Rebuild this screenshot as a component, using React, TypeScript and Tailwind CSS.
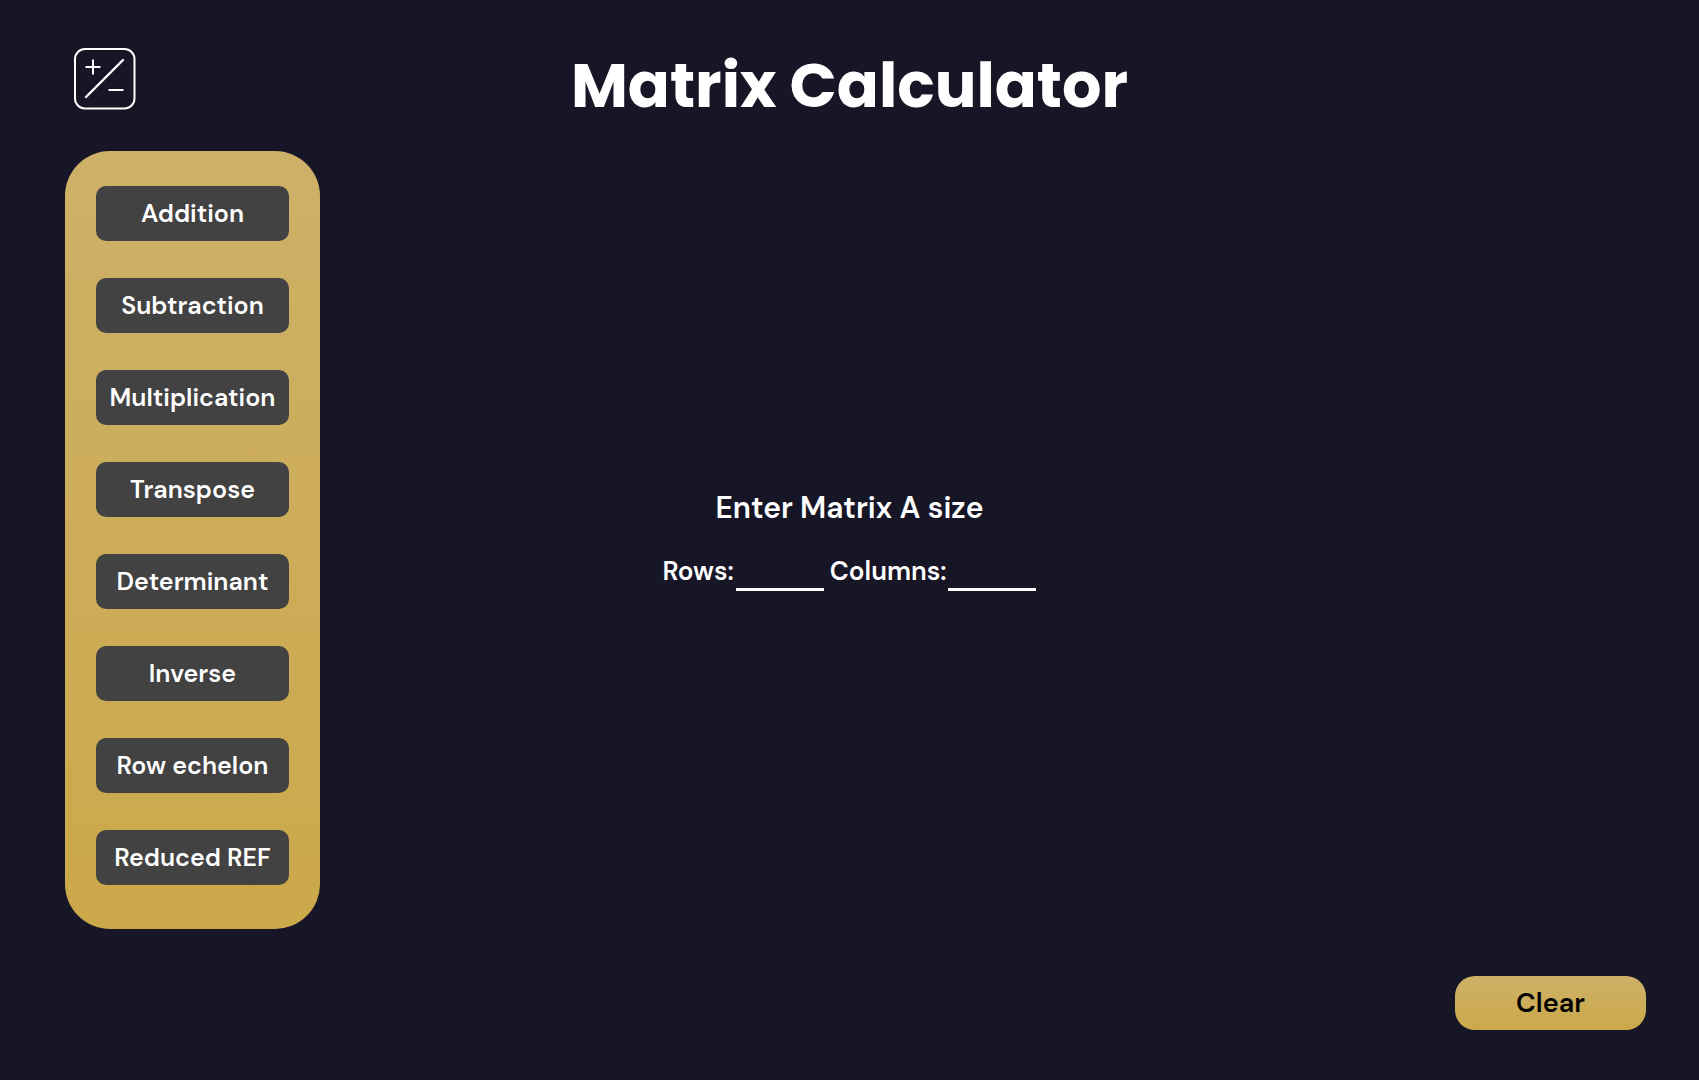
const operations = [
  'Addition',
  'Subtraction',
  'Multiplication',
  'Transpose',
  'Determinant',
  'Inverse',
  'Row echelon',
  'Reduced REF',
];

function CalculatorIcon() {
  return (
    <svg
      className="ml-[73px] h-[63px] w-[63px] text-white"
      viewBox="0 0 63 63"
      fill="none"
      stroke="currentColor"
      strokeWidth="2"
      strokeLinecap="round"
      aria-hidden="true"
    >
      <rect x="2" y="2" width="59.5" height="59.5" rx="10" />
      <path d="M13 50 50 13" strokeWidth="2.4" />
      <path d="M12.500 20h15M20 12.500v15M35.500 43h15" strokeLinecap="butt" />
    </svg>
  );
}

function SizeField({ id, label }: { id: string; label: string }) {
  return (
    <div className="flex items-start gap-0.5">
      <label htmlFor={id} className="text-[26px] leading-9 font-semibold">
        {label}
      </label>
      <input
        id={id}
        type="text"
        inputMode="numeric"
        className="h-[38px] w-22 border-b-3 border-white bg-transparent text-center text-2xl outline-none"
      />
    </div>
  );
}

export default function App() {
  return (
    <div className="flex min-h-screen flex-col bg-[#171627] font-['DM_Sans',Inter,sans-serif] text-white [font-optical-sizing:none]">
      <header className="grid grid-cols-[1fr_auto_1fr] items-start pt-[47px] pb-[26px]">
        <CalculatorIcon />
        <h1 className="font-['Poppins',Inter,sans-serif] text-[62px] leading-[78px] font-bold">
          Matrix Calculator
        </h1>
      </header>

      <main className="grid grow grid-cols-[1fr_auto_1fr] items-center">
        <nav
          aria-label="Matrix operations"
          className="ml-[65px] flex w-[255px] flex-col gap-[37px] rounded-[45px] bg-linear-to-b from-[#ceb168] to-[#cba849] px-[31px] pt-[35px] pb-11"
        >
          {operations.map((name) => (
            <button
              key={name}
              type="button"
              className="h-[55px] rounded-[10px] bg-[#424242] text-[25px] font-semibold whitespace-nowrap"
            >
              {name}
            </button>
          ))}
        </nav>

        <form className="flex flex-col items-center gap-[27px]">
          <h2 className="text-[30px] leading-9 font-semibold">Enter Matrix A size</h2>
          <div className="flex gap-1.5">
            <SizeField id="rows" label="Rows:" />
            <SizeField id="columns" label="Columns:" />
          </div>
        </form>
      </main>

      <footer className="flex justify-end pt-[47px] pr-[53px] pb-[50px]">
        <button
          type="button"
          className="h-[54px] w-[191px] rounded-[20px] bg-linear-to-b from-[#ceb168] to-[#cba849] text-[27px] font-semibold text-black"
        >
          Clear
        </button>
      </footer>
    </div>
  );
}
